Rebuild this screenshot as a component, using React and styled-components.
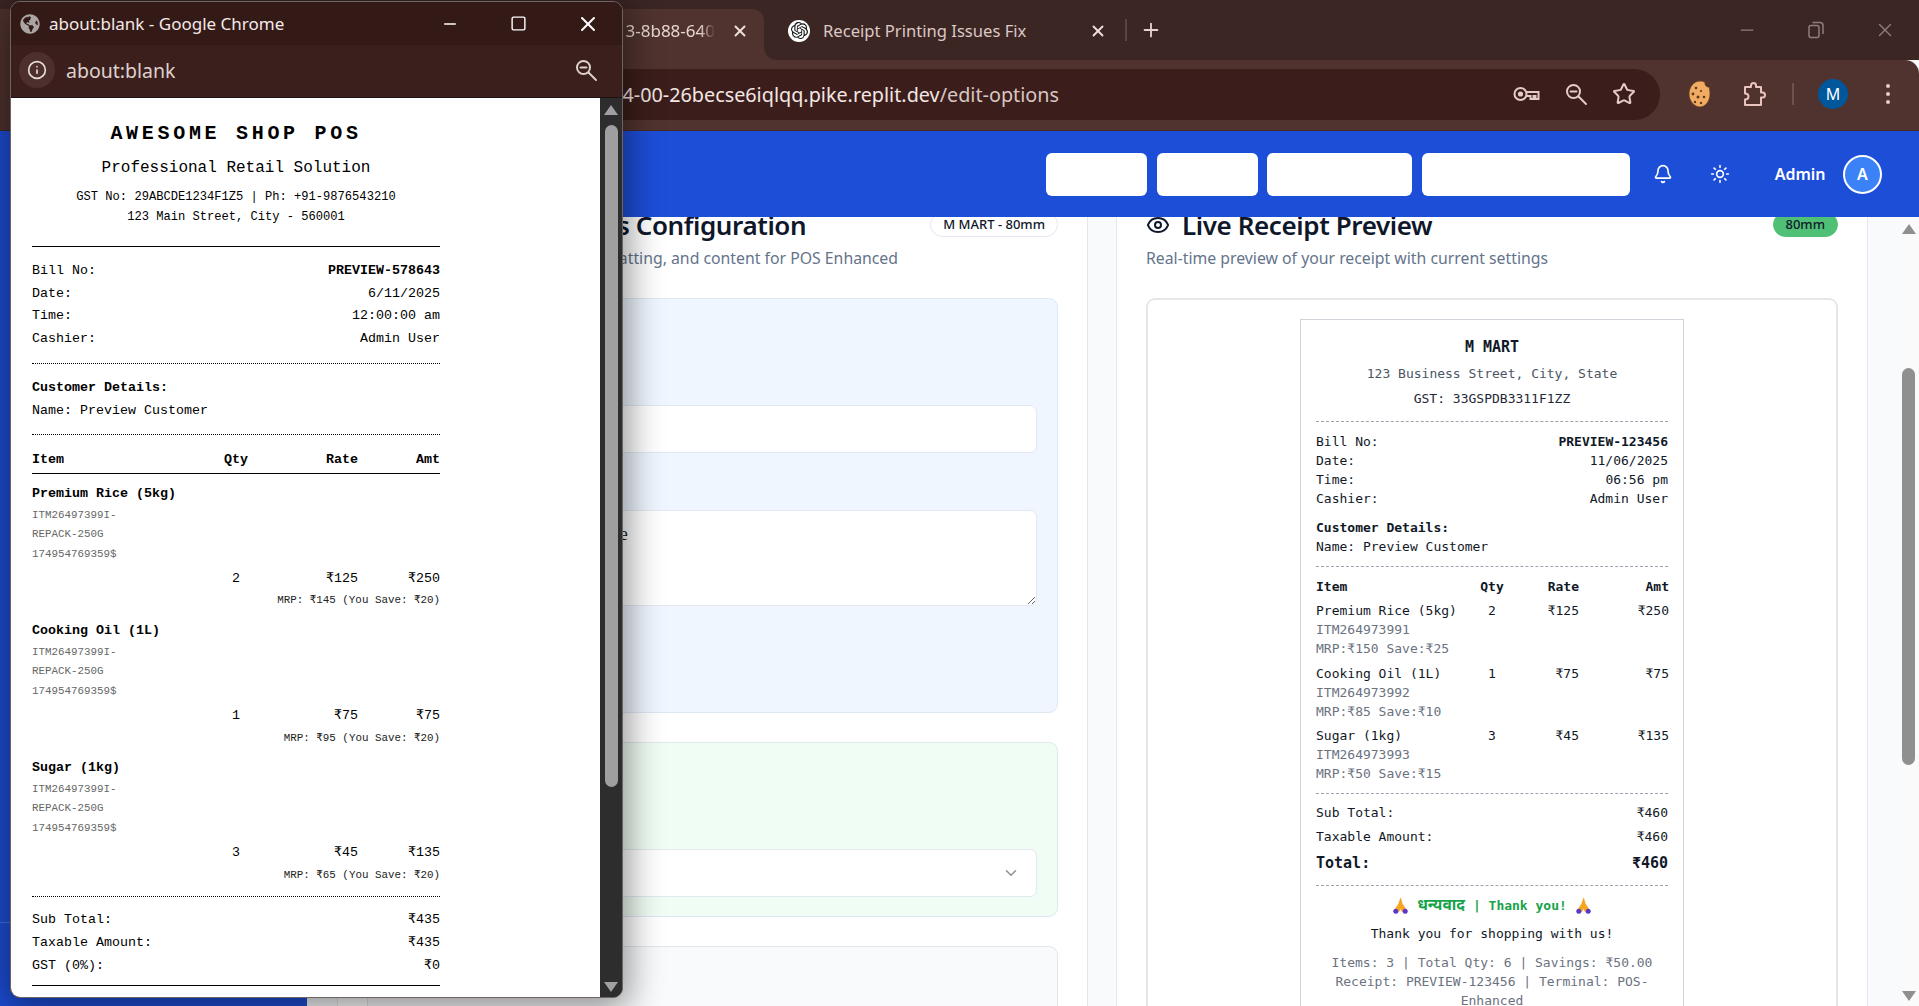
import React from 'react'
import styled, { createGlobalStyle } from 'styled-components'
import { Bell, ChevronDown, Eye, Info, Minus, Plus, Settings, Square, Star, Sun, X } from 'lucide-react'
import { FaGlobeAmericas } from 'react-icons/fa'
import { SiOpenai } from 'react-icons/si'

const UI_FONT = `"Noto Sans", "Open Sans", Arial, sans-serif`
const PRINT_FONT = `"Liberation Mono", "Courier New", monospace`
const PREVIEW_FONT = `"DejaVu Sans Mono", "Noto Sans", monospace`

const GlobalStyle = createGlobalStyle`
  html, body {
    margin: 0;
    height: 100%;
    overflow: hidden;
    font-family: ${UI_FONT};
  }
  * { box-sizing: border-box; }
`

const popupItems = [
  { name: 'Premium Rice (5kg)', qty: 2, rate: '₹125', amt: '₹250', mrp: 'MRP: ₹145 (You Save: ₹20)' },
  { name: 'Cooking Oil (1L)', qty: 1, rate: '₹75', amt: '₹75', mrp: 'MRP: ₹95 (You Save: ₹20)' },
  { name: 'Sugar (1kg)', qty: 3, rate: '₹45', amt: '₹135', mrp: 'MRP: ₹65 (You Save: ₹20)' },
]

const previewItems = [
  { name: 'Premium Rice (5kg)', qty: 2, rate: '₹125', amt: '₹250', sku: 'ITM264973991', mrp: 'MRP:₹150 Save:₹25' },
  { name: 'Cooking Oil (1L)', qty: 1, rate: '₹75', amt: '₹75', sku: 'ITM264973992', mrp: 'MRP:₹85 Save:₹10' },
  { name: 'Sugar (1kg)', qty: 3, rate: '₹45', amt: '₹135', sku: 'ITM264973993', mrp: 'MRP:₹50 Save:₹15' },
]

function KeyIcon() {
  return (
    <svg width="27" height="18" viewBox="0 0 27 18" fill="none" stroke="#e3cbc7" strokeWidth="2">
      <circle cx="7.5" cy="9" r="6" />
      <circle cx="7.5" cy="9" r="1.6" fill="#e3cbc7" />
      <path d="M13.5 7h12v7h-3v-3h-2v3h-3v-3h-4" />
    </svg>
  )
}

function MagnifierIcon({ color }) {
  return (
    <svg width="24" height="24" viewBox="0 0 24 24" fill="none" stroke={color} strokeWidth="2" strokeLinecap="round">
      <circle cx="9.500" cy="9.500" r="6.500" />
      <path d="M6.500 9.500h6" />
      <path d="M14.500 14.500 22 22" />
    </svg>
  )
}

function CookieIcon() {
  return (
    <svg width="26" height="30" viewBox="0 0 26 30">
      <path d="M13 2c2 0 3.500.4 5 1.200-.5 2.800 1.500 5 4 4.800.6 1.400 1 4 1 7 0 7-4.500 13-10 13S2 22 2 15 7 2 13 2z" fill="#f2ab63" stroke="#5f3d20" strokeWidth=".8" />
      <g fill="#5d3a1e">
        <circle cx="9" cy="9" r="1.300" />
        <circle cx="14" cy="12" r="1.100" />
        <circle cx="6" cy="15" r="1.400" />
        <circle cx="11" cy="18" r="1.500" />
        <circle cx="17" cy="18" r="1.300" />
        <circle cx="8" cy="23" r="1.200" />
        <circle cx="14" cy="24" r="1.200" />
        <circle cx="20" cy="2.500" r="1" />
        <circle cx="24" cy="6" r="1" />
      </g>
    </svg>
  )
}

function PuzzleIcon() {
  return (
    <svg width="24" height="26" viewBox="0 0 24 26" fill="none" stroke="#eac3be" strokeWidth="2" strokeLinejoin="round">
      <path d="M3 6h6V4.500a2.500 2.500 0 0 1 5 0V6h5v5.500h1.500a2.500 2.500 0 0 1 0 5H19V24H3v-5.500c2.500 0 3.500-1.300 3.500-3s-1-3-3.500-3z" />
    </svg>
  )
}

function RestoreIcon() {
  return (
    <svg width="16" height="18" viewBox="0 0 16 18" fill="none" stroke="#8f7f7c" strokeWidth="1.500">
      <rect x="1" y="4.500" width="10" height="12" rx="2" />
      <path d="M4.500 1.500H12a3 3 0 0 1 3 3V13" />
    </svg>
  )
}

function PrayIcon() {
  return (
    <svg width="15" height="16" viewBox="0 0 15 16">
      <path d="M7.200 0 5.500 5.500 2 11l4 3 1.500-3 1.500 3 4-3-3.500-5.500L8 0z" fill="#f6a623" />
      <circle cx="2.800" cy="13.200" r="2.500" fill="#5b37c4" />
      <circle cx="12.200" cy="13.200" r="2.500" fill="#5b37c4" />
    </svg>
  )
}

function ScrollRail({ dark, thumbOffset, thumbHeight }) {
  return (
    <Rail $dark={dark}>
      <RailArrow $dark={dark} />
      <RailThumb $dark={dark} style={{ marginTop: thumbOffset, height: thumbHeight }} />
      <RailArrow $dark={dark} $down />
    </Rail>
  )
}

function PopupReceipt() {
  return (
    <PrintSheet>
      <PrintTitle>AWESOME SHOP POS</PrintTitle>
      <PrintTagline>Professional Retail Solution</PrintTagline>
      <PrintMeta>GST No: 29ABCDE1234F1Z5 | Ph: +91-9876543210</PrintMeta>
      <PrintMeta>123 Main Street, City - 560001</PrintMeta>
      <PrintRule $gap={19} />
      <PrintBlock $gap={13}>
        <PrintRow><span>Bill No:</span><strong>PREVIEW-578643</strong></PrintRow>
        <PrintRow><span>Date:</span><span>6/11/2025</span></PrintRow>
        <PrintRow><span>Time:</span><span>12:00:00 am</span></PrintRow>
        <PrintRow><span>Cashier:</span><span>Admin User</span></PrintRow>
      </PrintBlock>
      <PrintRule $dotted $gap={12.1} />
      <PrintBlock $gap={13.2}>
        <PrintRow><strong>Customer Details:</strong></PrintRow>
        <PrintRow><span>Name: Preview Customer</span></PrintRow>
      </PrintBlock>
      <PrintRule $dotted $gap={11.5} />
      <PrintColumns $head>
        <span>Item</span>
        <PrintQty>Qty</PrintQty>
        <PrintAmount>Rate</PrintAmount>
        <PrintAmount>Amt</PrintAmount>
      </PrintColumns>
      <PrintRule $gap={1.7} />
      {popupItems.map((item) => (
        <PrintItem key={item.name}>
          <strong>{item.name}</strong>
          <PrintSku>ITM26497399I-</PrintSku>
          <PrintSku>REPACK-250G</PrintSku>
          <PrintSku>174954769359$</PrintSku>
          <PrintColumns $values>
            <span />
            <PrintQty>{item.qty}</PrintQty>
            <PrintAmount>{item.rate}</PrintAmount>
            <PrintAmount>{item.amt}</PrintAmount>
          </PrintColumns>
          <PrintMrp>{item.mrp}</PrintMrp>
        </PrintItem>
      ))}
      <PrintRule $dotted $gap={10.5} />
      <PrintBlock $gap={12}>
        <PrintRow><span>Sub Total:</span><span>₹435</span></PrintRow>
        <PrintRow><span>Taxable Amount:</span><span>₹435</span></PrintRow>
        <PrintRow><span>GST (0%):</span><span>₹0</span></PrintRow>
      </PrintBlock>
      <PrintRule $gap={7.5} />
    </PrintSheet>
  )
}

function PreviewReceipt() {
  return (
    <Receipt>
      <ReceiptName>M MART</ReceiptName>
      <ReceiptAddress>123 Business Street, City, State</ReceiptAddress>
      <ReceiptGst>GST: 33GSPDB3311F1ZZ</ReceiptGst>
      <ReceiptDash $gap={13.7} />
      <ReceiptBlock>
        <ReceiptRow><span>Bill No:</span><strong>PREVIEW-123456</strong></ReceiptRow>
        <ReceiptRow><span>Date:</span><span>11/06/2025</span></ReceiptRow>
        <ReceiptRow><span>Time:</span><span>06:56 pm</span></ReceiptRow>
        <ReceiptRow><span>Cashier:</span><span>Admin User</span></ReceiptRow>
      </ReceiptBlock>
      <ReceiptBlock>
        <strong>Customer Details:</strong>
        <div>Name: Preview Customer</div>
      </ReceiptBlock>
      <ReceiptDash $gap={9.8} />
      <ReceiptColumns $head>
        <span>Item</span>
        <ColQty>Qty</ColQty>
        <ColAmount>Rate</ColAmount>
        <ColAmount>Amt</ColAmount>
      </ReceiptColumns>
      <ReceiptItems>
        {previewItems.map((item) => (
          <div key={item.sku}>
            <ReceiptColumns>
              <span>{item.name}</span>
              <ColQty>{item.qty}</ColQty>
              <ColAmount>{item.rate}</ColAmount>
              <ColAmount>{item.amt}</ColAmount>
            </ReceiptColumns>
            <ItemNote>{item.sku}</ItemNote>
            <ItemNote>{item.mrp}</ItemNote>
          </div>
        ))}
      </ReceiptItems>
      <ReceiptDash $gap={9.7} />
      <ReceiptTotals>
        <ReceiptRow><span>Sub Total:</span><span>₹460</span></ReceiptRow>
        <ReceiptRow><span>Taxable Amount:</span><span>₹460</span></ReceiptRow>
      </ReceiptTotals>
      <GrandTotal><span>Total:</span><span>₹460</span></GrandTotal>
      <ReceiptDash $gap={11.3} />
      <ThanksLine>
        <PrayIcon />
        <span><HindiWord>धन्यवाद</HindiWord> | Thank you!</span>
        <PrayIcon />
      </ThanksLine>
      <ThanksNote>Thank you for shopping with us!</ThanksNote>
      <ReceiptFooter>
        <div>Items: 3 | Total Qty: 6 | Savings: ₹50.00</div>
        <div>Receipt: PREVIEW-123456 | Terminal: POS-Enhanced</div>
      </ReceiptFooter>
    </Receipt>
  )
}

export default function App() {
  return (
    <>
      <GlobalStyle />
      <Page>
        <TabStrip>
          <ActiveTab>
            <ActiveTabTitle>3-8b88-640</ActiveTabTitle>
            <TabClose><X size={18} strokeWidth={2.5} /></TabClose>
          </ActiveTab>
          <Tab>
            <TabFavicon><SiOpenai size={17} color="#111" /></TabFavicon>
            <TabTitle>Receipt Printing Issues Fix</TabTitle>
            <TabClose><X size={18} strokeWidth={2.5} /></TabClose>
          </Tab>
          <TabDivider />
          <NewTab><Plus size={22} strokeWidth={2} /></NewTab>
          <WindowControls>
            <WindowButton><Minus size={20} strokeWidth={1.5} /></WindowButton>
            <WindowButton><RestoreIcon /></WindowButton>
            <WindowButton><X size={22} strokeWidth={1.5} /></WindowButton>
          </WindowControls>
        </TabStrip>

        <Toolbar>
          <Omnibox>
            <UrlText>4-00-26becse6iqlqq.pike.replit.dev<UrlPath>/edit-options</UrlPath></UrlText>
            <OmniboxIcons>
              <KeyIcon />
              <MagnifierIcon color="#e3cbc7" />
              <Star size={24} strokeWidth={2} />
            </OmniboxIcons>
          </Omnibox>
          <CookieSlot><CookieIcon /></CookieSlot>
          <PuzzleSlot><PuzzleIcon /></PuzzleSlot>
          <ToolbarDivider />
          <ProfileBadge>M</ProfileBadge>
          <MenuDots><i /><i /><i /></MenuDots>
        </Toolbar>

        <AppHeader>
          <NavButton $width={101} />
          <NavButton $width={101} />
          <NavButton $width={145} />
          <NavButton $width={208} />
          <HeaderIcons>
            <HeaderIcon><Bell size={20} /></HeaderIcon>
            <HeaderIcon><Sun size={20} /></HeaderIcon>
          </HeaderIcons>
          <AdminName>Admin</AdminName>
          <AdminAvatar>A</AdminAvatar>
        </AppHeader>

        <Body>
          <Sidebar>
            <SidebarFooter />
          </Sidebar>
          <Main>
            <Columns>
              <Card>
                <CardHead>
                  <CardTitle $gap={40}><Settings size={24} />Receipt Settings Configuration</CardTitle>
                  <SizeBadge>M MART - 80mm</SizeBadge>
                </CardHead>
                <CardSub>Configure the receipt layout, formatting, and content for POS Enhanced</CardSub>
                <Sections>
                  <Section $tone="blue" $bottom={106}>
                    <Field>
                      <TextInput readOnly />
                    </Field>
                    <Field>
                      <AddressInput readOnly defaultValue="123 Business Street, City, State" />
                    </Field>
                  </Section>
                  <Section $tone="green" $bottom={19}>
                    <Field>
                      <SelectBox>
                        <ChevronDown size={18} color="#8b8f98" />
                      </SelectBox>
                    </Field>
                  </Section>
                  <Section $tone="gray" $bottom={60} />
                </Sections>
              </Card>

              <Card>
                <CardHead>
                  <CardTitle $gap={12}><Eye size={24} />Live Receipt Preview</CardTitle>
                  <WidthBadge>80mm</WidthBadge>
                </CardHead>
                <CardSub>Real-time preview of your receipt with current settings</CardSub>
                <PreviewFrame>
                  <PreviewReceipt />
                </PreviewFrame>
              </Card>
            </Columns>
          </Main>
          <ScrollRail thumbOffset={134} thumbHeight={397} />
        </Body>

        <PopupWindow>
          <PopupTitleBar>
            <FaGlobeAmericas size={20} color="#aaa4a3" />
            <PopupTitle>about:blank - Google Chrome</PopupTitle>
            <PopupControls>
              <PopupControl><Minus size={18} strokeWidth={2} /></PopupControl>
              <PopupControl><Square size={17} strokeWidth={2} /></PopupControl>
              <PopupControl><X size={24} strokeWidth={2} /></PopupControl>
            </PopupControls>
          </PopupTitleBar>
          <PopupAddressBar>
            <PopupInfo><Info size={20} strokeWidth={2} /></PopupInfo>
            <PopupUrl>about:blank</PopupUrl>
            <PopupZoom><MagnifierIcon color="#ded0cd" /></PopupZoom>
          </PopupAddressBar>
          <PopupBody>
            <PopupContent>
              <PopupReceipt />
            </PopupContent>
            <ScrollRail dark thumbOffset={10} thumbHeight={662} />
          </PopupBody>
        </PopupWindow>
      </Page>
    </>
  )
}

const Page = styled.div`
  position: relative;
  display: flex;
  flex-direction: column;
  height: 100vh;
  overflow: hidden;
  background: #f8fafc;
`

/* browser chrome */
const TabStrip = styled.div`
  display: flex;
  align-items: flex-end;
  flex: 0 0 60px;
  background: #3b2624;
`

const ActiveTab = styled.div`
  position: relative;
  display: flex;
  align-items: center;
  justify-content: flex-end;
  flex: 0 0 764px;
  height: 51px;
  padding: 0 14px 8px 0;
  background: #50332f;
  border-radius: 0 12px 0 0;
  &::after {
    content: '';
    position: absolute;
    right: -12px;
    bottom: 0;
    width: 12px;
    height: 12px;
    background: radial-gradient(circle at 100% 0, transparent 11.5px, #50332f 12px);
  }
`

const ActiveTabTitle = styled.span`
  width: 100px;
  margin-right: 15px;
  overflow: hidden;
  font-size: 17px;
  text-align: right;
  white-space: nowrap;
  color: #e8d6d2;
  -webkit-mask-image: linear-gradient(to right, #000 85%, transparent 100%);
  mask-image: linear-gradient(to right, #000 85%, transparent 100%);
`

const Tab = styled.div`
  display: flex;
  align-items: center;
  flex: 0 0 346px;
  height: 51px;
  padding: 0 2px 8px 24px;
`

const TabFavicon = styled.span`
  display: flex;
  align-items: center;
  justify-content: center;
  width: 22px;
  height: 22px;
  margin-right: 13px;
  background: #fff;
  border-radius: 50%;
`

const TabTitle = styled.span`
  flex: 1;
  font-size: 16.600px;
  white-space: nowrap;
  color: #dcc8c4;
`

const TabClose = styled.span`
  display: flex;
  align-items: center;
  justify-content: center;
  width: 20px;
  color: #efdedb;
`

const TabDivider = styled.span`
  flex: 0 0 2px;
  height: 22px;
  margin: 0 0 19px 15px;
  background: #5a4542;
`

const NewTab = styled.span`
  display: flex;
  justify-content: center;
  width: 24px;
  margin: 0 0 19px 12px;
  color: #e6d3cf;
`

const WindowControls = styled.div`
  display: flex;
  align-self: stretch;
  margin-left: auto;
`

const WindowButton = styled.span`
  display: flex;
  align-items: center;
  justify-content: center;
  width: 69px;
  color: #8f7f7c;
`

const Toolbar = styled.div`
  display: flex;
  align-items: center;
  flex: 0 0 71px;
  padding: 0 0 2px 10px;
  background: #50332f;
  border-bottom: 1px solid #452b28;
  border-radius: 0 14px 0 0;
`

const Omnibox = styled.div`
  display: flex;
  align-items: center;
  flex: 0 0 1650px;
  height: 51px;
  background: #3b1e1b;
  border-radius: 26px;
  color: #e3cbc7;
`

const UrlText = styled.div`
  flex: 0 0 1049px;
  overflow: hidden;
  font-size: 19.800px;
  text-align: right;
  white-space: nowrap;
  color: #f3e6e3;
`

const UrlPath = styled.span`
  color: #d9c6c2;
`

const OmniboxIcons = styled.div`
  display: flex;
  align-items: center;
  gap: 24px;
  margin: 0 24px 0 auto;
`

const CookieSlot = styled.span`
  display: flex;
  margin-left: 27px;
`

const PuzzleSlot = styled.span`
  display: flex;
  margin-left: 29px;
`

const ToolbarDivider = styled.span`
  width: 2px;
  height: 22px;
  margin-left: 26px;
  background: #6d524e;
`

const ProfileBadge = styled.span`
  display: flex;
  align-items: center;
  justify-content: center;
  width: 30px;
  height: 30px;
  margin-left: 24px;
  font-size: 16px;
  color: #fff;
  background: #01579b;
  border-radius: 50%;
`

const MenuDots = styled.span`
  display: flex;
  flex-direction: column;
  align-items: center;
  gap: 4px;
  width: 20px;
  margin-left: 30px;
  i {
    width: 4px;
    height: 4px;
    background: #e8cfca;
    border-radius: 50%;
  }
`

/* app */
const AppHeader = styled.header`
  display: flex;
  align-items: center;
  justify-content: flex-end;
  flex: 0 0 86px;
  gap: 9.500px;
  padding-right: 37px;
  background: #1d4ed8;
`

const NavButton = styled.button`
  width: ${(p) => p.$width}px;
  height: 43px;
  background: #fff;
  border: 0;
  border-radius: 6px;
`

const HeaderIcons = styled.div`
  display: flex;
  gap: 17px;
  margin: 0 25px 0 4px;
`

const HeaderIcon = styled.span`
  display: flex;
  align-items: center;
  justify-content: center;
  width: 40px;
  height: 40px;
  color: #fff;
`

const AdminName = styled.span`
  margin-right: 8px;
  font-size: 16px;
  font-weight: 600;
  color: #fff;
`

const AdminAvatar = styled.span`
  display: flex;
  align-items: center;
  justify-content: center;
  width: 39px;
  height: 39px;
  font-size: 16px;
  font-weight: 600;
  color: #fff;
  background: #3b82f6;
  border: 2px solid #fff;
  border-radius: 50%;
`

const Body = styled.div`
  display: flex;
  flex: 1;
  min-height: 0;
`

const Sidebar = styled.aside`
  display: flex;
  flex-direction: column;
  justify-content: flex-end;
  flex: 0 0 307px;
  background: #1d4ed8;
`

const SidebarFooter = styled.div`
  height: 84px;
  border-top: 1px solid rgba(255, 255, 255, 0.2);
`

const Main = styled.main`
  flex: 1;
  min-width: 0;
  padding: 0 30px;
  overflow: hidden;
`

/* the page is scrolled down a little, so the cards start above the header */
const Columns = styled.div`
  display: grid;
  grid-template-columns: 751px 1fr;
  gap: 28px;
  margin-top: -31px;
`

const Card = styled.section`
  padding: 23px 29px 30px;
  background: #fff;
  border: 1px solid #e2e8f0;
  border-width: 0 1px;
`

const CardHead = styled.div`
  display: flex;
  align-items: flex-start;
  justify-content: space-between;
`

const CardTitle = styled.h2`
  display: flex;
  align-items: center;
  gap: ${(p) => p.$gap}px;
  margin: 0;
  font-size: 26px;
  font-weight: 600;
  line-height: 32px;
  letter-spacing: -0.4px;
  color: #0f172a;
`

const SizeBadge = styled.span`
  height: 25px;
  margin-top: 3px;
  padding: 0 12px;
  font-size: 13px;
  font-weight: 500;
  line-height: 23px;
  color: #0f172a;
  background: #fff;
  border: 1px solid #e2e8f0;
  border-radius: 13px;
`

const WidthBadge = styled(SizeBadge)`
  background: #4fc075;
  border-color: #4fc075;
`

const CardSub = styled.p`
  margin: 6px 0 29px;
  font-size: 15.800px;
  line-height: 22px;
  color: #64748b;
`

const Sections = styled.div`
  display: flex;
  flex-direction: column;
  gap: 29.500px;
`

const sectionColors = { blue: '#eff6ff', green: '#f0fdf4', gray: '#f9fafb' }

/* the section headings sit behind the popup, only their height shows */
const Section = styled.div`
  padding: 70px 20px ${(p) => p.$bottom}px;
  background: ${(p) => sectionColors[p.$tone]};
  border: 1px solid #dfe7f1;
  border-radius: 9px;
`

const Field = styled.div`
  padding-top: 35.600px;
  margin-bottom: 21.400px;
  &:last-child {
    margin-bottom: 0;
  }
`

const TextInput = styled.input`
  display: block;
  width: 100%;
  height: 48px;
  padding: 0 13px;
  font-family: ${UI_FONT};
  font-size: 14px;
  background: #fff;
  border: 1px solid #e2e8f0;
  border-radius: 7px;
  outline: none;
`

const AddressInput = styled.textarea`
  display: block;
  width: 100%;
  height: 96px;
  padding: 13px 13px;
  font-family: "Liberation Serif", serif;
  font-size: 18px;
  line-height: 20px;
  color: #0f172a;
  background: #fff;
  border: 1px solid #e2e8f0;
  border-radius: 7px;
  outline: none;
  resize: vertical;
`

const SelectBox = styled.div`
  display: flex;
  align-items: center;
  justify-content: flex-end;
  height: 48px;
  padding: 0 16px 0 13px;
  background: #fff;
  border: 1px solid #e2e8f0;
  border-radius: 7px;
`

const PreviewFrame = styled.div`
  display: flex;
  justify-content: center;
  padding: 19px;
  background: #fff;
  border: 2px solid #e5e7eb;
  border-radius: 9px;
`

/* live preview receipt */
const Receipt = styled.div`
  width: 384px;
  padding: 16px 15px;
  font-family: ${PREVIEW_FONT};
  font-size: 13px;
  line-height: 19px;
  color: #111827;
  background: #fff;
  border: 1px solid #d1d5db;
`

const ReceiptName = styled.div`
  font-size: 15px;
  font-weight: 700;
  line-height: 22px;
  text-align: center;
`

const ReceiptAddress = styled.div`
  margin-top: 6.400px;
  text-align: center;
  color: #4b5563;
`

const ReceiptGst = styled.div`
  margin-top: 5.400px;
  text-align: center;
  color: #1f2937;
`

const ReceiptDash = styled.div`
  margin-top: ${(p) => p.$gap}px;
  border-top: 1px dashed #9ca3af;
`

const ReceiptBlock = styled.div`
  margin-top: 10px;
  strong {
    font-weight: 700;
  }
`

const ReceiptRow = styled.div`
  display: flex;
  justify-content: space-between;
`

const ReceiptColumns = styled.div`
  display: grid;
  grid-template-columns: 150px 52px 61px 90px;
  margin-top: ${(p) => (p.$head ? '10px' : '0')};
  font-weight: ${(p) => (p.$head ? 700 : 400)};
  white-space: nowrap;
`

const ColQty = styled.span`
  text-align: center;
`

const ColAmount = styled.span`
  text-align: right;
`

const ReceiptItems = styled.div`
  display: flex;
  flex-direction: column;
  gap: 5.500px;
  margin-top: 5px;
`

const ItemNote = styled.div`
  color: #6b7280;
`

const ReceiptTotals = styled.div`
  display: flex;
  flex-direction: column;
  gap: 5px;
  margin-top: 9.200px;
`

const GrandTotal = styled.div`
  display: flex;
  justify-content: space-between;
  margin-top: 5.500px;
  font-size: 15px;
  font-weight: 700;
  line-height: 22px;
`

const ThanksLine = styled.div`
  display: flex;
  align-items: center;
  justify-content: center;
  gap: 9px;
  margin-top: 10.200px;
  font-weight: 700;
  color: #16a34a;
`

const HindiWord = styled.span`
  font-size: 15.500px;
  line-height: 19px;
`

const ThanksNote = styled.div`
  margin-top: 9px;
  text-align: center;
`

const ReceiptFooter = styled.div`
  margin-top: 10px;
  text-align: center;
  color: #6b7280;
`

/* scrollbars */
const Rail = styled.div`
  display: flex;
  flex-direction: column;
  align-items: center;
  flex: 0 0 ${(p) => (p.$dark ? 22 : 21)}px;
  padding: 7px 0 5px;
  background: ${(p) => (p.$dark ? '#2d2d2d' : '#fafafa')};
`

const RailArrow = styled.span`
  width: 0;
  height: 0;
  margin-top: ${(p) => (p.$down ? 'auto' : '0')};
  border-style: solid;
  border-width: ${(p) => (p.$down ? '10px 7px 0' : '0 7px 10px')};
  border-color: ${(p) => {
    const c = p.$dark ? '#a0a0a0' : '#8f8f8f'
    return p.$down ? `${c} transparent transparent` : `transparent transparent ${c}`
  }};
`

const RailThumb = styled.span`
  width: 13px;
  background: ${(p) => (p.$dark ? '#9f9f9f' : '#8f8f8f')};
  border-radius: 7px;
`

/* about:blank popup */
const PopupWindow = styled.div`
  position: absolute;
  top: 1px;
  left: 10px;
  display: flex;
  flex-direction: column;
  width: 613px;
  height: 997px;
  overflow: hidden;
  background: #341a17;
  border: 1px solid #6f6461;
  border-radius: 10px;
  box-shadow: 0 6px 34px 6px rgba(0, 0, 0, 0.42);
`

const PopupTitleBar = styled.div`
  display: flex;
  align-items: center;
  flex: 0 0 43px;
  padding-left: 9px;
  background: #341a17;
`

const PopupTitle = styled.span`
  margin-left: 9px;
  font-size: 17px;
  white-space: nowrap;
  color: #f3e8e6;
`

const PopupControls = styled.div`
  display: flex;
  align-self: stretch;
  margin-left: auto;
`

const PopupControl = styled.span`
  display: flex;
  align-items: center;
  justify-content: center;
  width: 69px;
  color: #fff;
`

const PopupAddressBar = styled.div`
  display: flex;
  align-items: center;
  flex: 0 0 53px;
  padding: 0 24px 2px 8px;
  background: #3b1f1c;
  border-bottom: 1px solid #1d1110;
`

const PopupInfo = styled.span`
  display: flex;
  align-items: center;
  justify-content: center;
  width: 36px;
  height: 36px;
  color: #e8dcda;
  background: #4d302d;
  border-radius: 50%;
`

const PopupUrl = styled.span`
  margin-left: 11px;
  font-size: 19.500px;
  color: #ded0cd;
`

const PopupZoom = styled.span`
  display: flex;
  margin-left: auto;
`

const PopupBody = styled.div`
  display: flex;
  flex: 1;
  min-height: 0;
`

const PopupContent = styled.div`
  flex: 1;
  padding: 24px 0 0 21px;
  overflow: hidden;
  background: #fff;
`

const PrintSheet = styled.div`
  width: 408px;
  font-family: ${PRINT_FONT};
  font-size: 13.330px;
  line-height: 22.670px;
  color: #000;
  strong {
    font-weight: 700;
  }
`

const PrintTitle = styled.div`
  font-size: 20px;
  font-weight: 700;
  line-height: 24px;
  letter-spacing: 3.700px;
  text-align: center;
`

const PrintTagline = styled.div`
  margin: 12px 0 9px;
  font-size: 16px;
  line-height: 20px;
  text-align: center;
`

const PrintMeta = styled.div`
  font-size: 12.100px;
  line-height: 20px;
  text-align: center;
`

const PrintRule = styled.div`
  margin-top: ${(p) => p.$gap}px;
  border-top: 1px ${(p) => (p.$dotted ? 'dotted' : 'solid')} #000;
`

const PrintBlock = styled.div`
  margin-top: ${(p) => p.$gap}px;
`

const PrintRow = styled.div`
  display: flex;
  justify-content: space-between;
`

const PrintColumns = styled.div`
  display: grid;
  grid-template-columns: 180px 48px 98px 82px;
  margin-top: ${(p) => (p.$head ? '14px' : p.$values ? '3.700px' : '0')};
  font-weight: ${(p) => (p.$head ? 700 : 400)};
`

const PrintQty = styled.span`
  text-align: center;
`

const PrintAmount = styled.span`
  text-align: right;
`

const PrintItem = styled.div`
  margin-top: 8.700px;
  padding-bottom: 1px;
`

const PrintSku = styled.div`
  font-size: 10.850px;
  line-height: 19.500px;
  color: #666;
`

const PrintMrp = styled.div`
  font-size: 10.850px;
  line-height: 20px;
  text-align: right;
  color: #222;
`
